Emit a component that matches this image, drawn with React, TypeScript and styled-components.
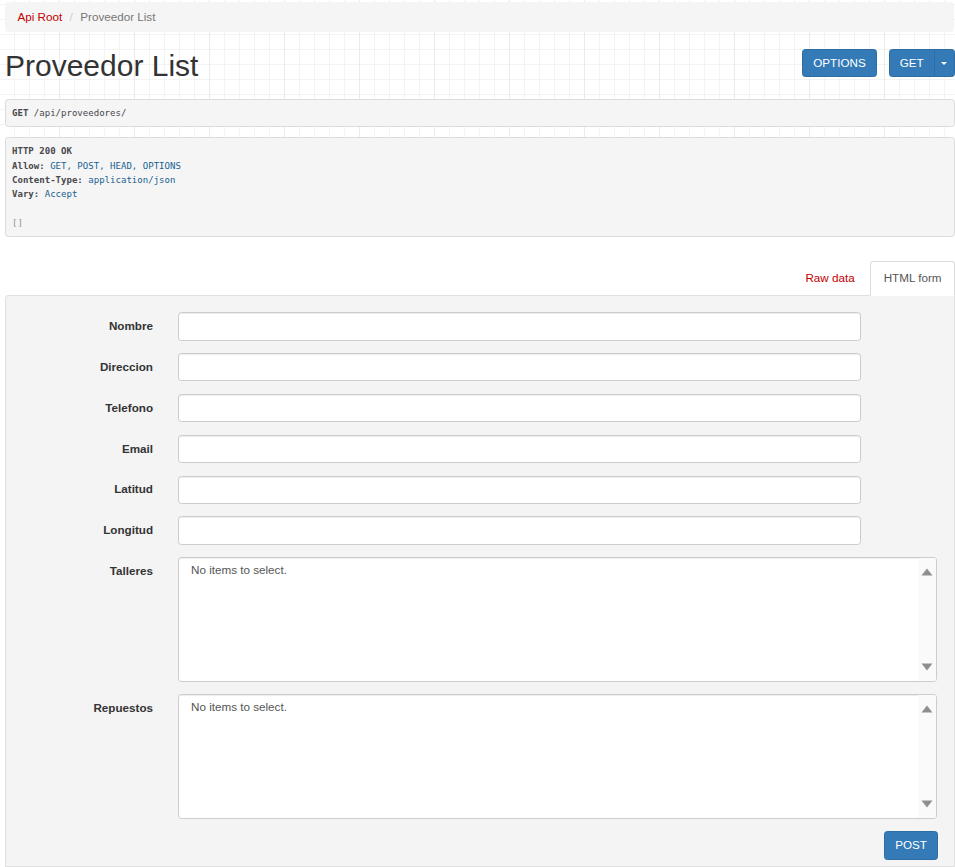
import React from 'react';
import styled, { createGlobalStyle } from 'styled-components';

const GlobalStyle = createGlobalStyle`
  html, body {
    margin: 0;
    padding: 0;
    height: 867px;
    overflow: hidden;
  }
  body {
    font-family: "Liberation Sans", Arial, Helvetica, sans-serif;
    font-size: 11.67px;
    line-height: 16.67px;
    color: #333;
    background-color: #fff;
    background-image:
      linear-gradient(to right, transparent 59px, #ebebeb 59px, #ebebeb 60px, transparent 60px),
      linear-gradient(to right, transparent 14px, #f3f3f3 14px, #f3f3f3 15px),
      repeating-linear-gradient(to bottom, transparent 0px, transparent 4px, #f3f3f3 4px, #f3f3f3 5px, transparent 5px, transparent 15px);
    background-size: 75px 137px, 15px 137px, 15px 137px;
    background-repeat: repeat-x, repeat-x, repeat-x;
  }
  * { box-sizing: border-box; }
`;

const Page = styled.div`
  width: 955px;
  height: 867px;
  padding: 2px 0 0 5px;
  display: flex;
  flex-direction: column;
`;

const Breadcrumb = styled.nav`
  height: 30px;
  width: 949px;
  background: #f5f5f5;
  border-radius: 3.3px;
  padding: 0 12.5px;
  display: flex;
  align-items: center;
`;

const CrumbLink = styled.a`
  color: #c20000;
  text-decoration: none;
`;

const CrumbSep = styled.span`
  color: #ccc;
  margin: 0 7.4px;
`;

const CrumbCurrent = styled.span`
  color: #777;
`;

const HeaderRow = styled.div`
  margin-top: 17px;
  display: flex;
  justify-content: space-between;
  align-items: flex-start;
  width: 950px;
`;

const Title = styled.h1`
  margin: 0;
  font-size: 30px;
  line-height: 33px;
  font-weight: 500;
  color: #333;
`;

const ButtonBar = styled.div`
  display: flex;
  gap: 12px;
`;

const SplitGroup = styled.div`
  display: flex;
`;

const PrimaryButton = styled.button<{ $part?: 'left' | 'right' }>`
  font-family: inherit;
  font-size: 11.67px;
  line-height: 16.67px;
  height: 28.33px;
  color: #fff;
  background: #337ab7;
  border: 1px solid #2e6da4;
  border-radius: ${p =>
    p.$part === 'left' ? '3.3px 0 0 3.3px' : p.$part === 'right' ? '0 3.3px 3.3px 0' : '3.3px'};
  padding: ${p => (p.$part === 'right' ? '5px 6.67px' : '5px 10px')};
  margin-left: ${p => (p.$part === 'right' ? '-1px' : '0')};
  display: flex;
  align-items: center;
  justify-content: center;
  cursor: pointer;
`;

const Caret = styled.span`
  display: inline-block;
  width: 0;
  height: 0;
  border-top: 3.4px solid #fff;
  border-left: 3.4px solid transparent;
  border-right: 3.4px solid transparent;
`;

const CodeBox = styled.pre<{ $gap: number }>`
  margin: ${p => p.$gap}px 0 0 0;
  width: 950px;
  background: #f5f5f6;
  border: 1px solid #dcdcdc;
  border-radius: 3.3px;
  padding: 6px 6px;
  font-family: "DejaVu Sans Mono", "Liberation Mono", monospace;
  font-size: 9.05px;
  line-height: 14.28px;
  color: #48484c;
  white-space: pre;
`;

const Lit = styled.span`
  color: #195f91;
`;

const Pun = styled.span`
  color: #8a9696;
`;

const Tabs = styled.div`
  margin-top: 24px;
  width: 950px;
  display: flex;
  justify-content: flex-end;
  position: relative;
  z-index: 1;
`;

const Tab = styled.a<{ $active?: boolean }>`
  display: block;
  padding: 8.33px 12.5px;
  line-height: 16.67px;
  border: 1px solid ${p => (p.$active ? '#ddd' : 'transparent')};
  border-bottom-color: transparent;
  border-radius: 3.3px 3.3px 0 0;
  margin-right: ${p => (p.$active ? '0' : '2px')};
  margin-bottom: -1px;
  background: ${p => (p.$active ? '#fff' : 'transparent')};
  color: ${p => (p.$active ? '#555' : '#c20000')};
  text-decoration: none;
  cursor: pointer;
`;

const Panel = styled.div`
  flex: 1;
  width: 950px;
  background: #f4f4f4;
  border: 1px solid #e0e0e0;
  border-radius: 3.3px 0 0 0;
  padding: 16px 16px 0 16px;
`;

const FormRow = styled.div`
  display: flex;
  align-items: flex-start;
  gap: 25px;
  margin-bottom: 12.5px;
`;

const Label = styled.label`
  width: 131px;
  flex: none;
  text-align: right;
  font-weight: bold;
  padding-top: 5.83px;
  line-height: 16.67px;
  color: #333;
`;

const TextInput = styled.input`
  width: 683px;
  height: 28.33px;
  border: 1px solid #ccc;
  border-radius: 3.3px;
  background: #fff;
  box-shadow: inset 0 1px 1px rgba(0, 0, 0, 0.075);
  padding: 5px 10px;
  font-family: inherit;
  font-size: 11.67px;
  color: #555;
  outline: none;
`;

const MultiSelect = styled.div`
  width: 759px;
  height: 124.5px;
  border: 1px solid #ccc;
  border-radius: 3.3px;
  background: #fff;
  box-shadow: inset 0 1px 1px rgba(0, 0, 0, 0.075);
  display: flex;
  overflow: hidden;
`;

const OptionList = styled.div`
  flex: 1;
  padding: 5px 0 0 12px;
  color: #555;
  line-height: 14px;
`;

const ScrollTrack = styled.div`
  width: 18px;
  flex: none;
  background: #fafafa;
  display: flex;
  flex-direction: column;
  justify-content: space-between;
  align-items: center;
  padding: 10px 0 9.5px 0;
`;

const Actions = styled.div`
  display: flex;
  justify-content: flex-end;
`;

const Arrow = ({ dir }: { dir: 'up' | 'down' }) => (
  <svg width="12" height="8" viewBox="0 0 12 8">
    {dir === 'up' ? (
      <path d="M6 0.5 L11.5 7.5 L0.5 7.5 Z" fill="#8f8f8f" />
    ) : (
      <path d="M0.5 0.5 L11.5 0.5 L6 7.5 Z" fill="#8f8f8f" />
    )}
  </svg>
);

const textFields = ['Nombre', 'Direccion', 'Telefono', 'Email', 'Latitud', 'Longitud'];
const multiFields = ['Talleres', 'Repuestos'];

export default function App() {
  return (
    <>
      <GlobalStyle />
      <Page>
        <Breadcrumb>
          <CrumbLink href="#">Api Root</CrumbLink>
          <CrumbSep>/</CrumbSep>
          <CrumbCurrent>Proveedor List</CrumbCurrent>
        </Breadcrumb>

        <HeaderRow>
          <Title>Proveedor List</Title>
          <ButtonBar>
            <PrimaryButton>OPTIONS</PrimaryButton>
            <SplitGroup>
              <PrimaryButton $part="left">GET</PrimaryButton>
              <PrimaryButton $part="right">
                <Caret />
              </PrimaryButton>
            </SplitGroup>
          </ButtonBar>
        </HeaderRow>

        <CodeBox $gap={17}>
          <b>GET</b> /api/proveedores/
        </CodeBox>

        <CodeBox $gap={10}>
          <b>HTTP 200 OK</b>
          {'\n'}
          <b>Allow:</b> <Lit>GET, POST, HEAD, OPTIONS</Lit>
          {'\n'}
          <b>Content-Type:</b> <Lit>application/json</Lit>
          {'\n'}
          <b>Vary:</b> <Lit>Accept</Lit>
          {'\n\n'}
          <Pun>[]</Pun>
        </CodeBox>

        <Tabs>
          <Tab>Raw data</Tab>
          <Tab $active>HTML form</Tab>
        </Tabs>

        <Panel>
          {textFields.map(f => (
            <FormRow key={f}>
              <Label>{f}</Label>
              <TextInput type="text" />
            </FormRow>
          ))}
          {multiFields.map(f => (
            <FormRow key={f}>
              <Label>{f}</Label>
              <MultiSelect>
                <OptionList>No items to select.</OptionList>
                <ScrollTrack>
                  <Arrow dir="up" />
                  <Arrow dir="down" />
                </ScrollTrack>
              </MultiSelect>
            </FormRow>
          ))}
          <Actions>
            <PrimaryButton>POST</PrimaryButton>
          </Actions>
        </Panel>
      </Page>
    </>
  );
}
